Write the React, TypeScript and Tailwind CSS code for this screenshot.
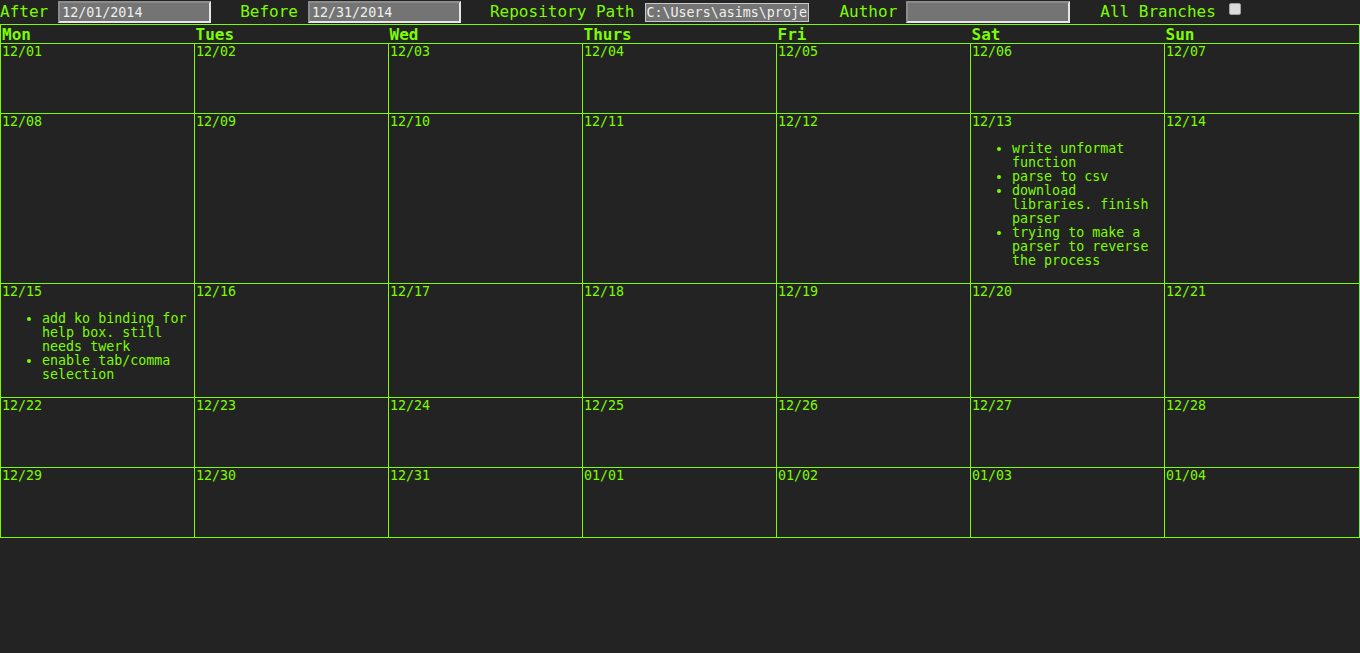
import React from 'react'

const mono = { fontFamily: '"DejaVu Sans Mono", "Liberation Mono", monospace' }

type Day = { date: string; notes?: string[] }

const weeks: Day[][] = [
  [{ date: '12/01' }, { date: '12/02' }, { date: '12/03' }, { date: '12/04' }, { date: '12/05' }, { date: '12/06' }, { date: '12/07' }],
  [
    { date: '12/08' }, { date: '12/09' }, { date: '12/10' }, { date: '12/11' }, { date: '12/12' },
    {
      date: '12/13',
      notes: [
        'write unformat function',
        'parse to csv',
        'download libraries. finish parser',
        'trying to make a parser to reverse the process',
      ],
    },
    { date: '12/14' },
  ],
  [
    { date: '12/15', notes: ['add ko binding for help box. still needs twerk', 'enable tab/comma selection'] },
    { date: '12/16' }, { date: '12/17' }, { date: '12/18' }, { date: '12/19' }, { date: '12/20' }, { date: '12/21' },
  ],
  [{ date: '12/22' }, { date: '12/23' }, { date: '12/24' }, { date: '12/25' }, { date: '12/26' }, { date: '12/27' }, { date: '12/28' }],
  [{ date: '12/29' }, { date: '12/30' }, { date: '12/31' }, { date: '01/01' }, { date: '01/02' }, { date: '01/03' }, { date: '01/04' }],
]

const days = ['Mon', 'Tues', 'Wed', 'Thurs', 'Fri', 'Sat', 'Sun']

const inputCls =
  'h-[22px] bg-[#747474] text-[#f0f0f0] text-[13.33px] px-[2px] border-2 border-t-[#8c8c8c] border-l-[#8c8c8c] border-b-[#e6e6e6] border-r-[#e6e6e6] outline-none'

export default function App() {
  return (
    <div className="min-h-screen bg-[#232323] text-[#7cfc00]" style={mono}>
      {/* filter bar */}
      <div className="h-[24px] flex items-center text-[16px] leading-none whitespace-nowrap">
        <span>After</span>
        <input readOnly value="12/01/2014" className={`${inputCls} w-[153px] ml-[10px]`} style={mono} />
        <span className="ml-[29px]">Before</span>
        <input readOnly value="12/31/2014" className={`${inputCls} w-[153px] ml-[10px]`} style={mono} />
        <span className="ml-[29px]">Repository Path</span>
        <input
          readOnly
          value="C:\Users\asims\projects"
          className="h-[19px] w-[164px] ml-[11px] bg-[#747474] text-[#f0f0f0] text-[13.33px] border border-[#c8c8c8] outline-none"
          style={mono}
        />
        <span className="ml-[30px]">Author</span>
        <input readOnly value="" className={`${inputCls} w-[164px] ml-[9px]`} style={mono} />
        <span className="ml-[30px]">All Branches</span>
        <span className="ml-[13px] mb-[6px] w-[12px] h-[12px] rounded-[2px] bg-[#dcdcdc] border border-[#a0a0a0]" />
      </div>

      <table className="w-[1360px] table-fixed border-collapse border border-[#7cfc00]">
        <colgroup>
          {days.map((d, i) => (
            <col key={d} className={i < 6 ? 'w-[194px]' : ''} />
          ))}
        </colgroup>
        <thead>
          <tr className="border-b border-[#7cfc00]">
            {days.map(d => (
              <th key={d} className="text-left font-bold text-[16px] leading-[17px] px-[1px] pt-[1px] align-top">
                {d}
              </th>
            ))}
          </tr>
        </thead>
        <tbody>
          {weeks.map((week, i) => (
            <tr key={i}>
              {week.map(day => (
                <td
                  key={day.date}
                  className="border border-[#7cfc00] h-[70px] align-top p-[1px] text-[13.33px] leading-[14px]"
                >
                  <div>{day.date}</div>
                  {day.notes && (
                    <ul className="list-disc pl-[40px] pr-[4px] mt-[13px] mb-[14px]">
                      {day.notes.map(n => (
                        <li key={n}>{n}</li>
                      ))}
                    </ul>
                  )}
                </td>
              ))}
            </tr>
          ))}
        </tbody>
      </table>
    </div>
  )
}
